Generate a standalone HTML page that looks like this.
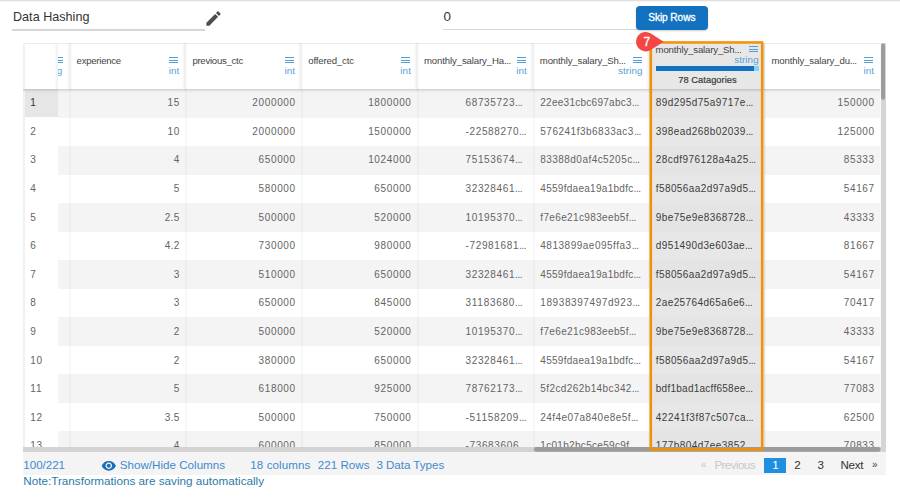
<!DOCTYPE html>
<html><head><meta charset="utf-8"><style>
html,body{margin:0;padding:0;width:900px;height:497px;overflow:hidden;background:#fff;font-family:"Liberation Sans", sans-serif;}
div{position:absolute;}
.t{white-space:nowrap;line-height:1;}
</style></head><body>
<div style="left:0.00px;top:0.00px;width:900.00px;height:1.00px;background:#e0e0e0"></div><div style="left:0.00px;top:1.00px;width:900.00px;height:1.00px;background:#f5f5f5"></div><div class="t" style="left:13.00px;top:10.73px;font-size:12.6px;color:#333;letter-spacing:0.013px;font-weight:normal;">Data Hashing</div><div style="left:12.00px;top:29.40px;width:193.00px;height:1.50px;background:#d6d6d6"></div><svg style="position:absolute;left:204.4px;top:9.1px" width="19" height="19" viewBox="0 0 24 24"><path fill="#4d4d4d" d="M3 17.25V21h3.75L17.81 9.94l-3.75-3.75L3 17.25zM20.71 7.04a1 1 0 0 0 0-1.41l-2.34-2.34a1 1 0 0 0-1.41 0l-1.83 1.83 3.75 3.75 1.83-1.83z"/></svg><div class="t" style="left:443.60px;top:9.86px;font-size:13.4px;color:#333;font-weight:normal;">0</div><div style="left:442.50px;top:28.90px;width:194.00px;height:1.20px;background:#d6d6d6"></div><div style="left:636px;top:6px;width:71.7px;height:23.6px;background:#1272c0;border-radius:4px;box-shadow:0 1px 2px rgba(0,0,0,.2)"></div><div class="t" style="left:648.20px;top:13.47px;font-size:10.2px;color:#fff;letter-spacing:-0.098px;font-weight:normal;-webkit-text-stroke:0.3px #fff">Skip Rows</div><div style="left:23.00px;top:43.00px;width:858.00px;height:404.00px;background:#fff"></div><div style="left:0;top:0;width:900px;height:447px;overflow:hidden"><div style="left:58.00px;top:89.00px;width:822.40px;height:28.53px;background:#f4f4f4"></div><div style="left:58.00px;top:146.06px;width:822.40px;height:28.53px;background:#f4f4f4"></div><div style="left:58.00px;top:203.12px;width:822.40px;height:28.53px;background:#f4f4f4"></div><div style="left:58.00px;top:260.18px;width:822.40px;height:28.53px;background:#f4f4f4"></div><div style="left:58.00px;top:317.24px;width:822.40px;height:28.53px;background:#f4f4f4"></div><div style="left:58.00px;top:374.30px;width:822.40px;height:28.53px;background:#f4f4f4"></div><div style="left:58.00px;top:431.36px;width:822.40px;height:28.53px;background:#f4f4f4"></div><div style="left:648.80px;top:89.00px;width:115.80px;height:370.89px;background:#e7e7e7"></div><div style="left:648.80px;top:89.00px;width:115.80px;height:28.53px;background:#e4e4e4"></div><div style="left:648.80px;top:146.06px;width:115.80px;height:28.53px;background:#e4e4e4"></div><div style="left:648.80px;top:203.12px;width:115.80px;height:28.53px;background:#e4e4e4"></div><div style="left:648.80px;top:260.18px;width:115.80px;height:28.53px;background:#e4e4e4"></div><div style="left:648.80px;top:317.24px;width:115.80px;height:28.53px;background:#e4e4e4"></div><div style="left:648.80px;top:374.30px;width:115.80px;height:28.53px;background:#e4e4e4"></div><div style="left:648.80px;top:431.36px;width:115.80px;height:28.53px;background:#e4e4e4"></div><div style="left:69.30px;top:43.00px;width:2.00px;height:404.00px;background:rgba(0,0,0,0.028)"></div><div style="left:185.10px;top:43.00px;width:2.00px;height:404.00px;background:rgba(0,0,0,0.028)"></div><div style="left:300.90px;top:43.00px;width:2.00px;height:404.00px;background:rgba(0,0,0,0.028)"></div><div style="left:416.70px;top:43.00px;width:2.00px;height:404.00px;background:rgba(0,0,0,0.028)"></div><div style="left:532.50px;top:43.00px;width:2.00px;height:404.00px;background:rgba(0,0,0,0.028)"></div><div style="left:648.30px;top:43.00px;width:2.00px;height:404.00px;background:rgba(0,0,0,0.028)"></div><div style="left:764.10px;top:43.00px;width:2.00px;height:404.00px;background:rgba(0,0,0,0.028)"></div><div style="left:879.90px;top:43.00px;width:2.00px;height:404.00px;background:rgba(0,0,0,0.028)"></div><div style="left:23.00px;top:89.00px;width:35.00px;height:370.89px;background:#fff"></div><div style="left:23.00px;top:89.00px;width:35.00px;height:27.73px;background:#e6e6e6"></div><div style="left:23.00px;top:43.00px;width:2.00px;height:404.00px;background:#f1f1f1"></div><div class="t" style="left:30.20px;top:98.13px;font-size:10.0px;color:#333;letter-spacing:0.638px;font-weight:normal;">1</div><div class="t" style="right:720.06px;text-align:right;top:98.13px;font-size:10.0px;color:#646464;letter-spacing:0.638px;font-weight:normal;">15</div><div class="t" style="right:604.26px;text-align:right;top:98.13px;font-size:10.0px;color:#646464;letter-spacing:0.638px;font-weight:normal;">2000000</div><div class="t" style="right:488.46px;text-align:right;top:98.13px;font-size:10.0px;color:#646464;letter-spacing:0.638px;font-weight:normal;">1800000</div><div class="t" style="right:25.26px;text-align:right;top:98.13px;font-size:10.0px;color:#646464;letter-spacing:0.638px;font-weight:normal;">150000</div><div class="t" style="left:465.50px;top:98.13px;font-size:10.0px;color:#646464;letter-spacing:0.638px;font-weight:normal;">68735723<span style="letter-spacing:-0.45px">...</span></div><div class="t" style="left:540.30px;top:98.13px;font-size:10.0px;color:#646464;letter-spacing:0.266px;font-weight:normal;">22ee31cbc697abc3<span style="letter-spacing:-0.45px">...</span></div><div class="t" style="left:655.80px;top:98.13px;font-size:10.0px;color:#3c3c3c;letter-spacing:0.438px;font-weight:normal;">89d295d75a9717e<span style="letter-spacing:-0.45px">...</span></div><div class="t" style="left:30.20px;top:126.73px;font-size:10.0px;color:#646464;letter-spacing:0.638px;font-weight:normal;">2</div><div class="t" style="right:720.06px;text-align:right;top:126.73px;font-size:10.0px;color:#646464;letter-spacing:0.638px;font-weight:normal;">10</div><div class="t" style="right:604.26px;text-align:right;top:126.73px;font-size:10.0px;color:#646464;letter-spacing:0.638px;font-weight:normal;">2000000</div><div class="t" style="right:488.46px;text-align:right;top:126.73px;font-size:10.0px;color:#646464;letter-spacing:0.638px;font-weight:normal;">1500000</div><div class="t" style="right:25.26px;text-align:right;top:126.73px;font-size:10.0px;color:#646464;letter-spacing:0.638px;font-weight:normal;">125000</div><div class="t" style="left:465.50px;top:126.73px;font-size:10.0px;color:#646464;letter-spacing:0.642px;font-weight:normal;">-22588270<span style="letter-spacing:-0.45px">...</span></div><div class="t" style="left:540.30px;top:126.73px;font-size:10.0px;color:#646464;letter-spacing:0.497px;font-weight:normal;">576241f3b6833ac3<span style="letter-spacing:-0.45px">...</span></div><div class="t" style="left:655.80px;top:126.73px;font-size:10.0px;color:#3c3c3c;letter-spacing:0.438px;font-weight:normal;">398ead268b02039<span style="letter-spacing:-0.45px">...</span></div><div class="t" style="left:30.20px;top:155.34px;font-size:10.0px;color:#646464;letter-spacing:0.638px;font-weight:normal;">3</div><div class="t" style="right:720.06px;text-align:right;top:155.34px;font-size:10.0px;color:#646464;letter-spacing:0.638px;font-weight:normal;">4</div><div class="t" style="right:604.26px;text-align:right;top:155.34px;font-size:10.0px;color:#646464;letter-spacing:0.638px;font-weight:normal;">650000</div><div class="t" style="right:488.46px;text-align:right;top:155.34px;font-size:10.0px;color:#646464;letter-spacing:0.638px;font-weight:normal;">1024000</div><div class="t" style="right:25.26px;text-align:right;top:155.34px;font-size:10.0px;color:#646464;letter-spacing:0.638px;font-weight:normal;">85333</div><div class="t" style="left:465.50px;top:155.34px;font-size:10.0px;color:#646464;letter-spacing:0.638px;font-weight:normal;">75153674<span style="letter-spacing:-0.45px">...</span></div><div class="t" style="left:540.30px;top:155.34px;font-size:10.0px;color:#646464;letter-spacing:0.451px;font-weight:normal;">83388d0af4c5205c<span style="letter-spacing:-0.45px">...</span></div><div class="t" style="left:655.80px;top:155.34px;font-size:10.0px;color:#3c3c3c;letter-spacing:0.451px;font-weight:normal;">28cdf976128a4a25<span style="letter-spacing:-0.45px">...</span></div><div class="t" style="left:30.20px;top:183.94px;font-size:10.0px;color:#646464;letter-spacing:0.638px;font-weight:normal;">4</div><div class="t" style="right:720.06px;text-align:right;top:183.94px;font-size:10.0px;color:#646464;letter-spacing:0.638px;font-weight:normal;">5</div><div class="t" style="right:604.26px;text-align:right;top:183.94px;font-size:10.0px;color:#646464;letter-spacing:0.638px;font-weight:normal;">580000</div><div class="t" style="right:488.46px;text-align:right;top:183.94px;font-size:10.0px;color:#646464;letter-spacing:0.638px;font-weight:normal;">650000</div><div class="t" style="right:25.26px;text-align:right;top:183.94px;font-size:10.0px;color:#646464;letter-spacing:0.638px;font-weight:normal;">54167</div><div class="t" style="left:465.50px;top:183.94px;font-size:10.0px;color:#646464;letter-spacing:0.638px;font-weight:normal;">32328461<span style="letter-spacing:-0.45px">...</span></div><div class="t" style="left:540.30px;top:183.94px;font-size:10.0px;color:#646464;letter-spacing:0.284px;font-weight:normal;">4559fdaea19a1bdfc<span style="letter-spacing:-0.45px">...</span></div><div class="t" style="left:655.80px;top:183.94px;font-size:10.0px;color:#3c3c3c;letter-spacing:0.403px;font-weight:normal;">f58056aa2d97a9d5<span style="letter-spacing:-0.45px">...</span></div><div class="t" style="left:30.20px;top:212.53px;font-size:10.0px;color:#646464;letter-spacing:0.638px;font-weight:normal;">5</div><div class="t" style="right:720.33px;text-align:right;top:212.53px;font-size:10.0px;color:#646464;letter-spacing:0.366px;font-weight:normal;">2.5</div><div class="t" style="right:604.26px;text-align:right;top:212.53px;font-size:10.0px;color:#646464;letter-spacing:0.638px;font-weight:normal;">500000</div><div class="t" style="right:488.46px;text-align:right;top:212.53px;font-size:10.0px;color:#646464;letter-spacing:0.638px;font-weight:normal;">520000</div><div class="t" style="right:25.26px;text-align:right;top:212.53px;font-size:10.0px;color:#646464;letter-spacing:0.638px;font-weight:normal;">43333</div><div class="t" style="left:465.50px;top:212.53px;font-size:10.0px;color:#646464;letter-spacing:0.638px;font-weight:normal;">10195370<span style="letter-spacing:-0.45px">...</span></div><div class="t" style="left:540.30px;top:212.53px;font-size:10.0px;color:#646464;letter-spacing:0.356px;font-weight:normal;">f7e6e21c983eeb5f<span style="letter-spacing:-0.45px">...</span></div><div class="t" style="left:655.80px;top:212.53px;font-size:10.0px;color:#3c3c3c;letter-spacing:0.438px;font-weight:normal;">9be75e9e8368728<span style="letter-spacing:-0.45px">...</span></div><div class="t" style="left:30.20px;top:241.13px;font-size:10.0px;color:#646464;letter-spacing:0.638px;font-weight:normal;">6</div><div class="t" style="right:720.33px;text-align:right;top:241.13px;font-size:10.0px;color:#646464;letter-spacing:0.366px;font-weight:normal;">4.2</div><div class="t" style="right:604.26px;text-align:right;top:241.13px;font-size:10.0px;color:#646464;letter-spacing:0.638px;font-weight:normal;">730000</div><div class="t" style="right:488.46px;text-align:right;top:241.13px;font-size:10.0px;color:#646464;letter-spacing:0.638px;font-weight:normal;">980000</div><div class="t" style="right:25.26px;text-align:right;top:241.13px;font-size:10.0px;color:#646464;letter-spacing:0.638px;font-weight:normal;">81667</div><div class="t" style="left:465.50px;top:241.13px;font-size:10.0px;color:#646464;letter-spacing:0.642px;font-weight:normal;">-72981681<span style="letter-spacing:-0.45px">...</span></div><div class="t" style="left:540.30px;top:241.13px;font-size:10.0px;color:#646464;letter-spacing:0.507px;font-weight:normal;">4813899ae095ffa3<span style="letter-spacing:-0.45px">...</span></div><div class="t" style="left:655.80px;top:241.13px;font-size:10.0px;color:#3c3c3c;letter-spacing:0.388px;font-weight:normal;">d951490d3e603ae<span style="letter-spacing:-0.45px">...</span></div><div class="t" style="left:30.20px;top:269.74px;font-size:10.0px;color:#646464;letter-spacing:0.638px;font-weight:normal;">7</div><div class="t" style="right:720.06px;text-align:right;top:269.74px;font-size:10.0px;color:#646464;letter-spacing:0.638px;font-weight:normal;">3</div><div class="t" style="right:604.26px;text-align:right;top:269.74px;font-size:10.0px;color:#646464;letter-spacing:0.638px;font-weight:normal;">510000</div><div class="t" style="right:488.46px;text-align:right;top:269.74px;font-size:10.0px;color:#646464;letter-spacing:0.638px;font-weight:normal;">650000</div><div class="t" style="right:25.26px;text-align:right;top:269.74px;font-size:10.0px;color:#646464;letter-spacing:0.638px;font-weight:normal;">54167</div><div class="t" style="left:465.50px;top:269.74px;font-size:10.0px;color:#646464;letter-spacing:0.638px;font-weight:normal;">32328461<span style="letter-spacing:-0.45px">...</span></div><div class="t" style="left:540.30px;top:269.74px;font-size:10.0px;color:#646464;letter-spacing:0.284px;font-weight:normal;">4559fdaea19a1bdfc<span style="letter-spacing:-0.45px">...</span></div><div class="t" style="left:655.80px;top:269.74px;font-size:10.0px;color:#3c3c3c;letter-spacing:0.403px;font-weight:normal;">f58056aa2d97a9d5<span style="letter-spacing:-0.45px">...</span></div><div class="t" style="left:30.20px;top:298.34px;font-size:10.0px;color:#646464;letter-spacing:0.638px;font-weight:normal;">8</div><div class="t" style="right:720.06px;text-align:right;top:298.34px;font-size:10.0px;color:#646464;letter-spacing:0.638px;font-weight:normal;">3</div><div class="t" style="right:604.26px;text-align:right;top:298.34px;font-size:10.0px;color:#646464;letter-spacing:0.638px;font-weight:normal;">650000</div><div class="t" style="right:488.46px;text-align:right;top:298.34px;font-size:10.0px;color:#646464;letter-spacing:0.638px;font-weight:normal;">845000</div><div class="t" style="right:25.26px;text-align:right;top:298.34px;font-size:10.0px;color:#646464;letter-spacing:0.638px;font-weight:normal;">70417</div><div class="t" style="left:465.50px;top:298.34px;font-size:10.0px;color:#646464;letter-spacing:0.731px;font-weight:normal;">31183680<span style="letter-spacing:-0.45px">...</span></div><div class="t" style="left:540.30px;top:298.34px;font-size:10.0px;color:#646464;letter-spacing:0.588px;font-weight:normal;">18938397497d923<span style="letter-spacing:-0.45px">...</span></div><div class="t" style="left:655.80px;top:298.34px;font-size:10.0px;color:#3c3c3c;letter-spacing:0.388px;font-weight:normal;">2ae25764d65a6e6<span style="letter-spacing:-0.45px">...</span></div><div class="t" style="left:30.20px;top:326.94px;font-size:10.0px;color:#646464;letter-spacing:0.638px;font-weight:normal;">9</div><div class="t" style="right:720.06px;text-align:right;top:326.94px;font-size:10.0px;color:#646464;letter-spacing:0.638px;font-weight:normal;">2</div><div class="t" style="right:604.26px;text-align:right;top:326.94px;font-size:10.0px;color:#646464;letter-spacing:0.638px;font-weight:normal;">500000</div><div class="t" style="right:488.46px;text-align:right;top:326.94px;font-size:10.0px;color:#646464;letter-spacing:0.638px;font-weight:normal;">520000</div><div class="t" style="right:25.26px;text-align:right;top:326.94px;font-size:10.0px;color:#646464;letter-spacing:0.638px;font-weight:normal;">43333</div><div class="t" style="left:465.50px;top:326.94px;font-size:10.0px;color:#646464;letter-spacing:0.638px;font-weight:normal;">10195370<span style="letter-spacing:-0.45px">...</span></div><div class="t" style="left:540.30px;top:326.94px;font-size:10.0px;color:#646464;letter-spacing:0.356px;font-weight:normal;">f7e6e21c983eeb5f<span style="letter-spacing:-0.45px">...</span></div><div class="t" style="left:655.80px;top:326.94px;font-size:10.0px;color:#3c3c3c;letter-spacing:0.438px;font-weight:normal;">9be75e9e8368728<span style="letter-spacing:-0.45px">...</span></div><div class="t" style="left:30.20px;top:355.54px;font-size:10.0px;color:#646464;letter-spacing:0.638px;font-weight:normal;">10</div><div class="t" style="right:720.06px;text-align:right;top:355.54px;font-size:10.0px;color:#646464;letter-spacing:0.638px;font-weight:normal;">2</div><div class="t" style="right:604.26px;text-align:right;top:355.54px;font-size:10.0px;color:#646464;letter-spacing:0.638px;font-weight:normal;">380000</div><div class="t" style="right:488.46px;text-align:right;top:355.54px;font-size:10.0px;color:#646464;letter-spacing:0.638px;font-weight:normal;">650000</div><div class="t" style="right:25.26px;text-align:right;top:355.54px;font-size:10.0px;color:#646464;letter-spacing:0.638px;font-weight:normal;">54167</div><div class="t" style="left:465.50px;top:355.54px;font-size:10.0px;color:#646464;letter-spacing:0.638px;font-weight:normal;">32328461<span style="letter-spacing:-0.45px">...</span></div><div class="t" style="left:540.30px;top:355.54px;font-size:10.0px;color:#646464;letter-spacing:0.284px;font-weight:normal;">4559fdaea19a1bdfc<span style="letter-spacing:-0.45px">...</span></div><div class="t" style="left:655.80px;top:355.54px;font-size:10.0px;color:#3c3c3c;letter-spacing:0.403px;font-weight:normal;">f58056aa2d97a9d5<span style="letter-spacing:-0.45px">...</span></div><div class="t" style="left:30.20px;top:384.14px;font-size:10.0px;color:#646464;letter-spacing:1.010px;font-weight:normal;">11</div><div class="t" style="right:720.06px;text-align:right;top:384.14px;font-size:10.0px;color:#646464;letter-spacing:0.638px;font-weight:normal;">5</div><div class="t" style="right:604.26px;text-align:right;top:384.14px;font-size:10.0px;color:#646464;letter-spacing:0.638px;font-weight:normal;">618000</div><div class="t" style="right:488.46px;text-align:right;top:384.14px;font-size:10.0px;color:#646464;letter-spacing:0.638px;font-weight:normal;">925000</div><div class="t" style="right:25.26px;text-align:right;top:384.14px;font-size:10.0px;color:#646464;letter-spacing:0.638px;font-weight:normal;">77083</div><div class="t" style="left:465.50px;top:384.14px;font-size:10.0px;color:#646464;letter-spacing:0.638px;font-weight:normal;">78762173<span style="letter-spacing:-0.45px">...</span></div><div class="t" style="left:540.30px;top:384.14px;font-size:10.0px;color:#646464;letter-spacing:0.404px;font-weight:normal;">5f2cd262b14bc342<span style="letter-spacing:-0.45px">...</span></div><div class="t" style="left:655.80px;top:384.14px;font-size:10.0px;color:#3c3c3c;letter-spacing:0.250px;font-weight:normal;">bdf1bad1acff658ee<span style="letter-spacing:-0.45px">...</span></div><div class="t" style="left:30.20px;top:412.74px;font-size:10.0px;color:#646464;letter-spacing:0.638px;font-weight:normal;">12</div><div class="t" style="right:720.33px;text-align:right;top:412.74px;font-size:10.0px;color:#646464;letter-spacing:0.366px;font-weight:normal;">3.5</div><div class="t" style="right:604.26px;text-align:right;top:412.74px;font-size:10.0px;color:#646464;letter-spacing:0.638px;font-weight:normal;">500000</div><div class="t" style="right:488.46px;text-align:right;top:412.74px;font-size:10.0px;color:#646464;letter-spacing:0.638px;font-weight:normal;">750000</div><div class="t" style="right:25.26px;text-align:right;top:412.74px;font-size:10.0px;color:#646464;letter-spacing:0.638px;font-weight:normal;">62500</div><div class="t" style="left:465.50px;top:412.74px;font-size:10.0px;color:#646464;letter-spacing:0.724px;font-weight:normal;">-51158209<span style="letter-spacing:-0.45px">...</span></div><div class="t" style="left:540.30px;top:412.74px;font-size:10.0px;color:#646464;letter-spacing:0.449px;font-weight:normal;">24f4e07a840e8e5f<span style="letter-spacing:-0.45px">...</span></div><div class="t" style="left:655.80px;top:412.74px;font-size:10.0px;color:#3c3c3c;letter-spacing:0.497px;font-weight:normal;">42241f3f87c507ca<span style="letter-spacing:-0.45px">...</span></div><div class="t" style="left:30.20px;top:441.34px;font-size:10.0px;color:#646464;letter-spacing:0.638px;font-weight:normal;">13</div><div class="t" style="right:720.06px;text-align:right;top:441.34px;font-size:10.0px;color:#646464;letter-spacing:0.638px;font-weight:normal;">4</div><div class="t" style="right:604.26px;text-align:right;top:441.34px;font-size:10.0px;color:#646464;letter-spacing:0.638px;font-weight:normal;">600000</div><div class="t" style="right:488.46px;text-align:right;top:441.34px;font-size:10.0px;color:#646464;letter-spacing:0.638px;font-weight:normal;">850000</div><div class="t" style="right:25.26px;text-align:right;top:441.34px;font-size:10.0px;color:#646464;letter-spacing:0.638px;font-weight:normal;">70833</div><div class="t" style="left:465.50px;top:441.34px;font-size:10.0px;color:#646464;letter-spacing:0.642px;font-weight:normal;">-73683606<span style="letter-spacing:-0.45px">...</span></div><div class="t" style="left:540.30px;top:441.34px;font-size:10.0px;color:#646464;letter-spacing:0.312px;font-weight:normal;">1c01b2bc5ce59c9f<span style="letter-spacing:-0.45px">...</span></div><div class="t" style="left:655.80px;top:441.34px;font-size:10.0px;color:#3c3c3c;letter-spacing:0.438px;font-weight:normal;">177b804d7ee3852<span style="letter-spacing:-0.45px">...</span></div></div><div style="left:23.00px;top:43.00px;width:857.40px;height:46.00px;background:#fff"></div><div style="left:23.00px;top:88.60px;width:857.40px;height:4.50px;background:linear-gradient(180deg,rgba(0,0,0,0.17),rgba(0,0,0,0.05) 45%,rgba(0,0,0,0))"></div><div style="left:23.00px;top:43.00px;width:857.40px;height:1.00px;background:#ececec"></div><div style="left:648.80px;top:43.00px;width:115.80px;height:46.00px;background:#e7e7e7"></div><div style="left:66.50px;top:43.00px;width:5.00px;height:46.00px;background:linear-gradient(90deg,rgba(0,0,0,0),rgba(0,0,0,0.075) 62%,rgba(0,0,0,0))"></div><div style="left:182.30px;top:43.00px;width:5.00px;height:46.00px;background:linear-gradient(90deg,rgba(0,0,0,0),rgba(0,0,0,0.075) 62%,rgba(0,0,0,0))"></div><div style="left:298.10px;top:43.00px;width:5.00px;height:46.00px;background:linear-gradient(90deg,rgba(0,0,0,0),rgba(0,0,0,0.075) 62%,rgba(0,0,0,0))"></div><div style="left:413.90px;top:43.00px;width:5.00px;height:46.00px;background:linear-gradient(90deg,rgba(0,0,0,0),rgba(0,0,0,0.075) 62%,rgba(0,0,0,0))"></div><div style="left:529.70px;top:43.00px;width:5.00px;height:46.00px;background:linear-gradient(90deg,rgba(0,0,0,0),rgba(0,0,0,0.075) 62%,rgba(0,0,0,0))"></div><div style="left:645.50px;top:43.00px;width:5.00px;height:46.00px;background:linear-gradient(90deg,rgba(0,0,0,0),rgba(0,0,0,0.075) 62%,rgba(0,0,0,0))"></div><div style="left:761.30px;top:43.00px;width:5.00px;height:46.00px;background:linear-gradient(90deg,rgba(0,0,0,0),rgba(0,0,0,0.075) 62%,rgba(0,0,0,0))"></div><div class="t" style="left:76.60px;top:55.87px;font-size:9.6px;color:#444444;letter-spacing:-0.266px;font-weight:normal;">experience</div><div style="left:169.40px;top:57.20px;width:9.00px;height:1.10px;background:#549fd8"></div><div style="left:169.40px;top:59.75px;width:9.00px;height:1.10px;background:#549fd8"></div><div style="left:169.40px;top:62.30px;width:9.00px;height:1.10px;background:#549fd8"></div><div class="t" style="right:720.60px;text-align:right;top:65.90px;font-size:9.8px;color:#549fd8;letter-spacing:0.100px;font-weight:normal;">int</div><div class="t" style="left:192.40px;top:55.87px;font-size:9.6px;color:#444444;letter-spacing:-0.274px;font-weight:normal;">previous_ctc</div><div style="left:285.20px;top:57.20px;width:9.00px;height:1.10px;background:#549fd8"></div><div style="left:285.20px;top:59.75px;width:9.00px;height:1.10px;background:#549fd8"></div><div style="left:285.20px;top:62.30px;width:9.00px;height:1.10px;background:#549fd8"></div><div class="t" style="right:604.80px;text-align:right;top:65.90px;font-size:9.8px;color:#549fd8;letter-spacing:0.100px;font-weight:normal;">int</div><div class="t" style="left:308.20px;top:55.87px;font-size:9.6px;color:#444444;letter-spacing:-0.147px;font-weight:normal;">offered_ctc</div><div style="left:401.00px;top:57.20px;width:9.00px;height:1.10px;background:#549fd8"></div><div style="left:401.00px;top:59.75px;width:9.00px;height:1.10px;background:#549fd8"></div><div style="left:401.00px;top:62.30px;width:9.00px;height:1.10px;background:#549fd8"></div><div class="t" style="right:489.00px;text-align:right;top:65.90px;font-size:9.8px;color:#549fd8;letter-spacing:0.100px;font-weight:normal;">int</div><div class="t" style="left:424.00px;top:55.87px;font-size:9.6px;color:#444444;letter-spacing:-0.128px;font-weight:normal;">monthly_salary_Ha<span style="letter-spacing:-0.45px">...</span></div><div style="left:516.80px;top:57.20px;width:9.00px;height:1.10px;background:#549fd8"></div><div style="left:516.80px;top:59.75px;width:9.00px;height:1.10px;background:#549fd8"></div><div style="left:516.80px;top:62.30px;width:9.00px;height:1.10px;background:#549fd8"></div><div class="t" style="right:373.20px;text-align:right;top:65.90px;font-size:9.8px;color:#549fd8;letter-spacing:0.100px;font-weight:normal;">int</div><div class="t" style="left:539.80px;top:55.87px;font-size:9.6px;color:#444444;letter-spacing:-0.155px;font-weight:normal;">monthly_salary_Sh<span style="letter-spacing:-0.45px">...</span></div><div style="left:632.60px;top:57.20px;width:9.00px;height:1.10px;background:#549fd8"></div><div style="left:632.60px;top:59.75px;width:9.00px;height:1.10px;background:#549fd8"></div><div style="left:632.60px;top:62.30px;width:9.00px;height:1.10px;background:#549fd8"></div><div class="t" style="right:257.40px;text-align:right;top:65.90px;font-size:9.8px;color:#549fd8;letter-spacing:0.100px;font-weight:normal;">string</div><div class="t" style="left:771.40px;top:55.87px;font-size:9.6px;color:#444444;letter-spacing:-0.122px;font-weight:normal;">monthly_salary_du<span style="letter-spacing:-0.45px">...</span></div><div style="left:864.20px;top:57.20px;width:9.00px;height:1.10px;background:#549fd8"></div><div style="left:864.20px;top:59.75px;width:9.00px;height:1.10px;background:#549fd8"></div><div style="left:864.20px;top:62.30px;width:9.00px;height:1.10px;background:#549fd8"></div><div class="t" style="right:25.80px;text-align:right;top:65.90px;font-size:9.8px;color:#549fd8;letter-spacing:0.100px;font-weight:normal;">int</div><div style="left:58px;top:43px;width:11px;height:46px;overflow:hidden"><div style="left:-58px;top:-43px;width:900px;height:497px"><div style="left:53.50px;top:57.20px;width:9.00px;height:1.10px;background:#549fd8"></div><div style="left:53.50px;top:59.75px;width:9.00px;height:1.10px;background:#549fd8"></div><div style="left:53.50px;top:62.30px;width:9.00px;height:1.10px;background:#549fd8"></div><div class="t" style="right:837.60px;text-align:right;top:65.90px;font-size:9.8px;color:#549fd8;letter-spacing:0.100px;font-weight:normal;">string</div></div></div><div style="left:55.00px;top:44.00px;width:3.00px;height:45.00px;background:linear-gradient(90deg,#fafafa,#f0f0f0)"></div><div style="left:23.00px;top:43.00px;width:2.00px;height:46.00px;background:#f1f1f1"></div><div class="t" style="left:655.60px;top:45.47px;font-size:9.6px;color:#444444;letter-spacing:-0.155px;font-weight:normal;">monthly_salary_Sh<span style="letter-spacing:-0.45px">...</span></div><div style="left:749.00px;top:46.30px;width:9.00px;height:1.10px;background:#549fd8"></div><div style="left:749.00px;top:48.85px;width:9.00px;height:1.10px;background:#549fd8"></div><div style="left:749.00px;top:51.40px;width:9.00px;height:1.10px;background:#549fd8"></div><div class="t" style="right:141.30px;text-align:right;top:54.50px;font-size:9.8px;color:#549fd8;letter-spacing:0.100px;font-weight:normal;">string</div><div style="left:655.70px;top:65.90px;width:98.00px;height:5.10px;background:#1272c2"></div><div style="left:753.70px;top:65.90px;width:5.30px;height:5.10px;background:#80d5f8"></div><div class="t" style="left:678.20px;top:75.63px;font-size:9.3px;color:#3a3a3a;letter-spacing:0.054px;font-weight:normal;-webkit-text-stroke:0.2px #3a3a3a">78 Catagories</div><div style="left:23.00px;top:447.00px;width:858.00px;height:5.00px;background:#d3d3d3"></div><div style="left:881.00px;top:43.00px;width:4.60px;height:409.00px;background:#d5d5d5"></div><svg style="position:absolute;left:0;top:0" width="900" height="497"><rect x="881.1" y="43.5" width="3.9" height="56.2" rx="1.9" fill="#9b9b9b"/><rect x="534" y="447" width="346.5" height="4.8" rx="2" fill="#9b9b9b"/></svg><svg style="position:absolute;left:0;top:0" width="900" height="497"><rect x="650.85" y="42.45" width="111.3" height="406.9" fill="none" stroke="#f59100" stroke-width="2.5"/></svg><svg style="position:absolute;left:634.80px;top:30.80px" width="29.6" height="21.4"><path fill="#f54646" d="M28.60,10.70 L15.96,2.55 A9.7,9.7 0 1 0 15.96,18.85 Z"/></svg><div class="t" style="left:643.60px;top:35.94px;font-size:12px;color:#fff;font-weight:normal;-webkit-text-stroke:0.35px #fff">7</div><div style="left:23.00px;top:452.00px;width:863.00px;height:23.00px;background:#f4f4f4"></div><div class="t" style="left:23.30px;top:458.78px;font-size:11.6px;color:#3d8bcf;letter-spacing:-0.033px;font-weight:normal;">100/221</div><svg style="position:absolute;left:100.95px;top:457.9px" width="15.6" height="15.6" viewBox="0 0 24 24"><path fill="#1b6fb8" d="M12 4.5C7 4.5 2.730 7.610 1 12c1.730 4.390 6 7.500 11 7.500s9.270-3.110 11-7.500c-1.730-4.390-6-7.500-11-7.500zM12 17c-2.760 0-5-2.240-5-5s2.240-5 5-5 5 2.240 5 5-2.240 5-5 5zm0-8c-1.660 0-3 1.340-3 3s1.340 3 3 3 3-1.340 3-3-1.340-3-3-3z"/></svg><div class="t" style="left:119.80px;top:458.78px;font-size:11.6px;color:#3d8bcf;letter-spacing:0.012px;font-weight:normal;">Show/Hide Columns</div><div class="t" style="left:250.30px;top:458.78px;font-size:11.6px;color:#3d8bcf;letter-spacing:0.078px;font-weight:normal;">18 columns</div><div class="t" style="left:317.70px;top:458.78px;font-size:11.6px;color:#3d8bcf;letter-spacing:0.040px;font-weight:normal;">221 Rows</div><div class="t" style="left:376.40px;top:458.78px;font-size:11.6px;color:#3d8bcf;letter-spacing:-0.028px;font-weight:normal;">3 Data Types</div><div class="t" style="left:700.70px;top:459.94px;font-size:10px;color:#c8c8c8;font-weight:normal;">«</div><div class="t" style="left:714.40px;top:458.78px;font-size:11.6px;color:#c8c8c8;letter-spacing:-0.566px;font-weight:normal;">Previous</div><div style="left:764.00px;top:458.20px;width:22.00px;height:14.70px;background:#1f8fe0"></div><div class="t" style="left:772.30px;top:458.78px;font-size:11.6px;color:#fff;font-weight:normal;">1</div><div class="t" style="left:794.20px;top:458.78px;font-size:11.6px;color:#333;font-weight:normal;">2</div><div class="t" style="left:817.60px;top:458.78px;font-size:11.6px;color:#333;font-weight:normal;">3</div><div class="t" style="left:840.40px;top:458.78px;font-size:11.6px;color:#333;letter-spacing:-0.213px;font-weight:normal;">Next</div><div class="t" style="left:872.00px;top:459.94px;font-size:10px;color:#444;font-weight:normal;">»</div><div class="t" style="left:23.30px;top:475.30px;font-size:11.7px;color:#2a7ba6;letter-spacing:0.004px;font-weight:normal;">Note:Transformations are saving automatically</div>
</body></html>
